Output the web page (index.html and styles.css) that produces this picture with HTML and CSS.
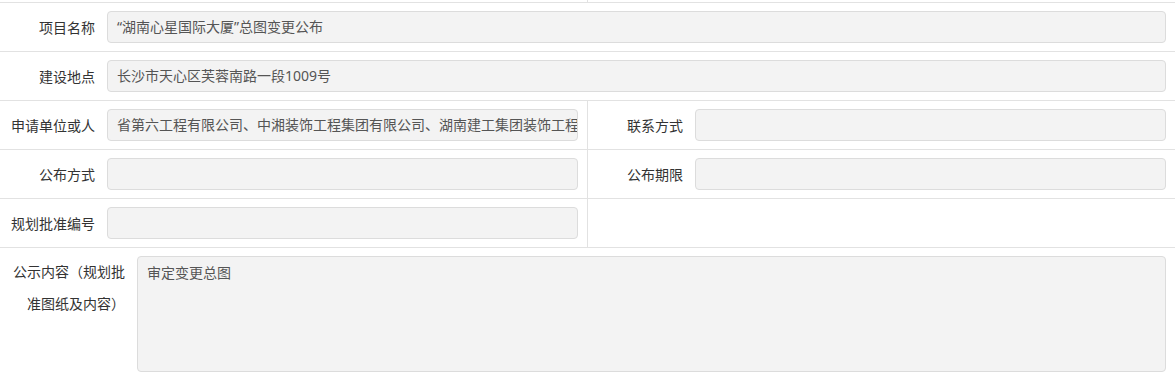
FILE: index.html
```html
<!DOCTYPE html>
<html lang="zh-CN">
<head>
    <meta charset="UTF-8">
    <meta name="viewport" content="width=device-width, initial-scale=1.0">
    <title>规划公示详情</title>
    <link rel="stylesheet" href="styles.css">
</head>
<body>
    <div class="form-table">
        <!-- tail of the row above -->
        <div class="row row-stub">
            <div class="cell half"></div>
            <div class="cell half"></div>
        </div>

        <div class="row">
            <div class="cell full">
                <label class="label">项目名称</label>
                <div class="field">“湖南心星国际大厦”总图变更公布</div>
            </div>
        </div>

        <div class="row">
            <div class="cell full">
                <label class="label">建设地点</label>
                <div class="field">长沙市天心区芙蓉南路一段1009号</div>
            </div>
        </div>

        <div class="row">
            <div class="cell half">
                <label class="label">申请单位或人</label>
                <div class="field">省第六工程有限公司、中湘装饰工程集团有限公司、湖南建工集团装饰工程有限公司</div>
            </div>
            <div class="cell half">
                <label class="label">联系方式</label>
                <div class="field"></div>
            </div>
        </div>

        <div class="row">
            <div class="cell half">
                <label class="label">公布方式</label>
                <div class="field"></div>
            </div>
            <div class="cell half">
                <label class="label">公布期限</label>
                <div class="field"></div>
            </div>
        </div>

        <div class="row">
            <div class="cell half">
                <label class="label">规划批准编号</label>
                <div class="field"></div>
            </div>
            <div class="cell half"></div>
        </div>

        <div class="row row-tall">
            <div class="cell full">
                <label class="label label-wide">公示内容（规划批准图纸及内容）</label>
                <div class="field field-area">审定变更总图</div>
            </div>
        </div>
    </div>
</body>
</html>
```

FILE: styles.css
```css
body {
    margin: 0;
    background-color: #fff;
    font-family: "Noto Sans", "Noto Sans CJK SC", sans-serif;
    font-size: 14px;
    color: #333;
}
.form-table {
    width: 1175px;
}
.row {
    display: flex;
    border-bottom: 1px solid #e2e2e2;
}
.row-stub {
    height: 2px;
    overflow: hidden;
}
.cell {
    display: flex;
    align-items: center;
    padding: 8px 9px 8px 0;
    box-sizing: border-box;
    min-height: 48px;
}
.row-stub .cell {
    min-height: 0;
    padding: 0;
}
.full {
    width: 100%;
}
.half {
    width: 588px;
}
.half:first-child {
    border-right: 1px solid #e2e2e2;
}
.half:last-child {
    width: 587px;
}
.label {
    flex: 0 0 107px;
    box-sizing: border-box;
    padding-right: 12px;
    text-align: right;
    white-space: nowrap;
}
.field {
    flex: 1;
    min-width: 0;
    height: 32px;
    line-height: 30px;
    padding: 0 9px;
    box-sizing: border-box;
    background-color: #f3f3f3;
    border: 1px solid #dcdcdc;
    border-radius: 4px;
    color: #555;
    white-space: nowrap;
    overflow: hidden;
}
.row-tall .cell {
    align-items: flex-start;
    padding-bottom: 12px;
}
.label-wide {
    flex-basis: 137px;
    white-space: normal;
    line-height: 32px;
}
.field-area {
    height: 116px;
    line-height: 20px;
    padding-top: 6px;
}
```
